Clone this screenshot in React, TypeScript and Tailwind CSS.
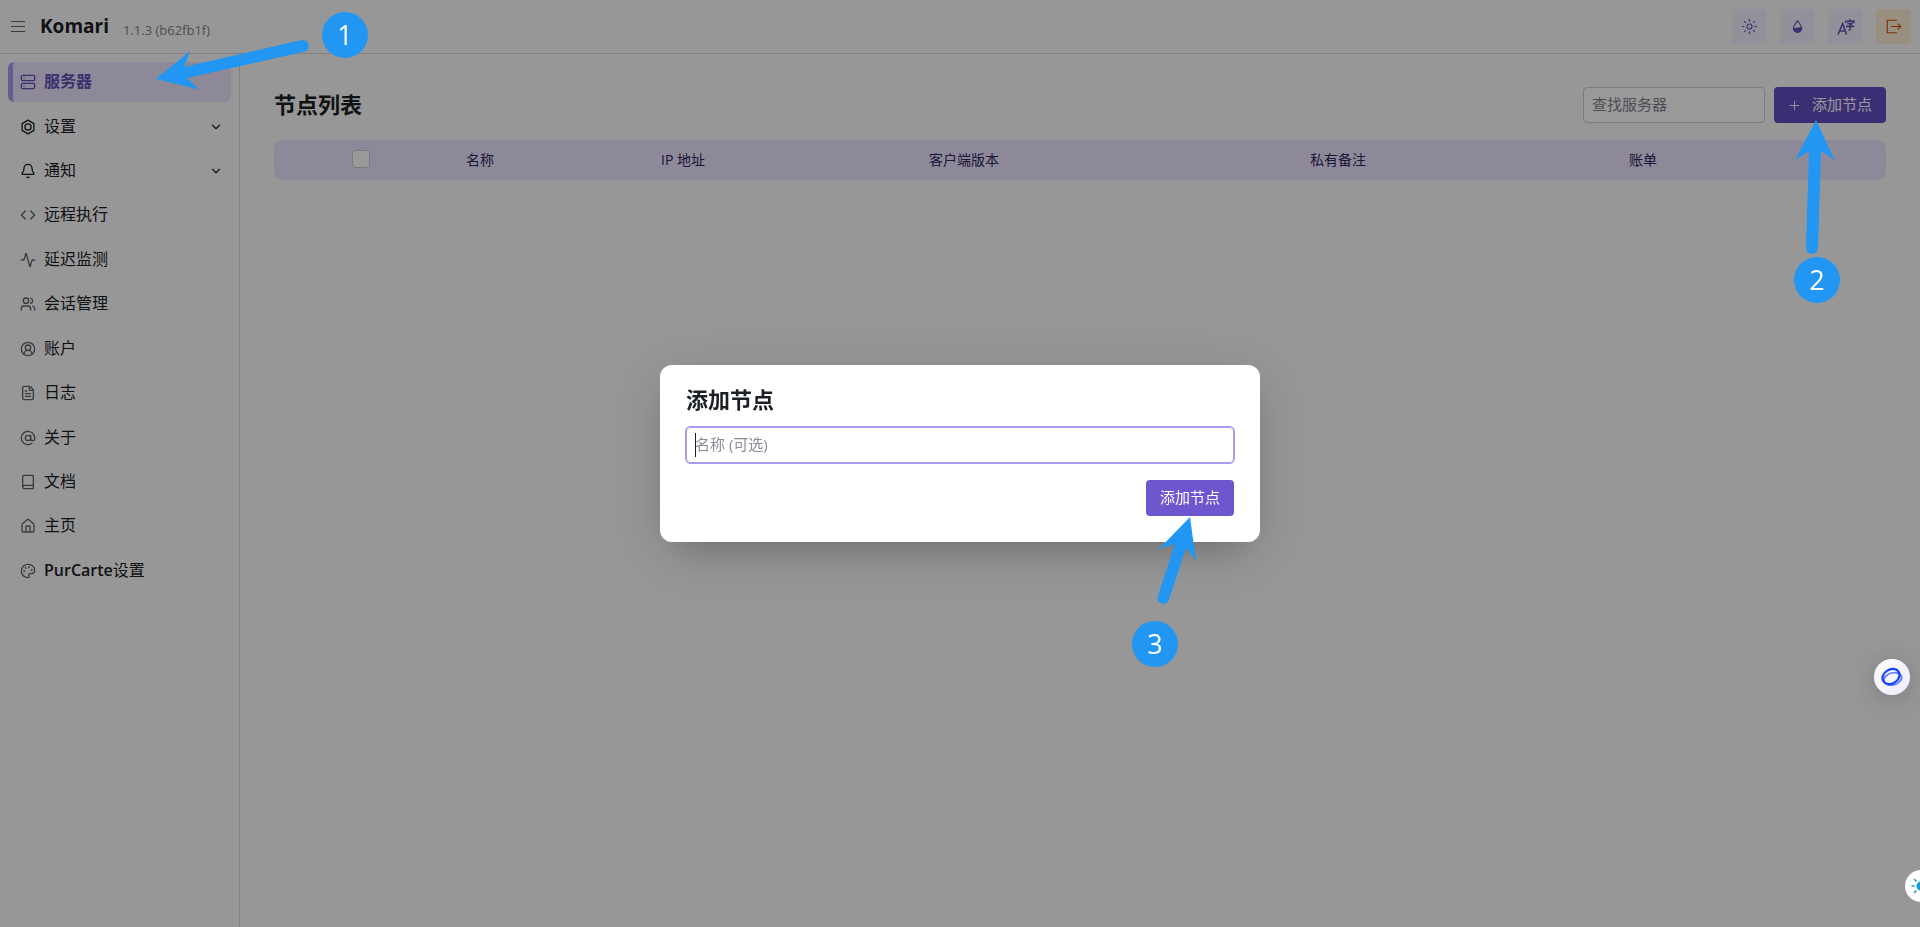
import React, { useState } from 'react';
import {
  Activity,
  AtSign,
  Bell,
  Book,
  ChevronDown,
  CircleUserRound,
  Code,
  FileText,
  House,
  Palette,
  Plus,
  Server,
  Users,
} from 'lucide-react';

interface NavItem {
  label: React.ReactNode;
  icon: React.ReactNode;
  active?: boolean;
  expandable?: boolean;
}

// Hexagon with a ring inside, used for the settings entry
const SettingsIcon = () => (
  <svg width="16" height="16" viewBox="0 0 24 24" fill="none" stroke="currentColor" strokeWidth="2" strokeLinejoin="round">
    <path d="M12 1.8 20.8 6.9V17.1L12 22.2 3.2 17.1V6.9Z" />
    <circle cx="12" cy="12" r="4.6" />
  </svg>
);

const SunIcon = () => (
  <svg width="15" height="15" viewBox="0 0 15 15" fill="none" stroke="currentColor" strokeWidth="1.2">
    <circle cx="7.5" cy="7.5" r="2.5" />
    <path d="M7.5 0v2.4M7.5 12.6V15M0 7.5h2.4M12.6 7.5H15M2.2 2.2l1.6 1.6M11.2 11.2l1.6 1.6M2.2 12.8l1.6-1.6M11.2 3.8l1.6-1.6" />
  </svg>
);

const DropIcon = () => (
  <svg width="15" height="15" viewBox="0 0 15 15" fill="none" stroke="currentColor" strokeWidth="1.1">
    <path d="M7.5 1.8C6.6 3.4 3.4 6.2 3.4 9.2a4.1 4.1 0 0 0 8.2 0C11.6 6.2 8.4 3.4 7.5 1.8Z" />
    <path d="M3.4 9.6c2.6-.4 4.800.2 8.200-1.600a4.100 4.100 0 0 1-8.200 1.600Z" fill="currentColor" />
  </svg>
);

const LanguageIcon = () => (
  <svg width="18" height="18" viewBox="0 0 18 18" fill="none" stroke="currentColor" strokeWidth="1.6">
    <path d="M1 16.5 5.7 5.8 9.4 16.5M2.8 13h5.5" />
    <path d="M8.9 5V3.2H17V5M12.8 1.3v1.9M10.3 5.6h4.7L13.2 7.5v3.8q0 1-1.8 1M8.9 8.4h8.3" />
  </svg>
);

const ExitIcon = () => (
  <svg width="17" height="17" viewBox="0 0 15 15" fill="none" stroke="currentColor">
    <path d="M10.5 2h-8.5v11h8.5M5.5 7.5h8M11.3 5l2.5 2.5-2.5 2.5" />
  </svg>
);

const navItems: NavItem[] = [
  { label: '服务器', icon: <Server size={16} />, active: true },
  { label: '设置', icon: <SettingsIcon />, expandable: true },
  { label: '通知', icon: <Bell size={16} />, expandable: true },
  { label: '远程执行', icon: <Code size={16} /> },
  { label: '延迟监测', icon: <Activity size={16} /> },
  { label: '会话管理', icon: <Users size={16} /> },
  { label: '账户', icon: <CircleUserRound size={16} /> },
  { label: '日志', icon: <FileText size={16} /> },
  { label: '关于', icon: <AtSign size={16} /> },
  { label: '文档', icon: <Book size={16} /> },
  { label: '主页', icon: <House size={16} /> },
  { label: <><span className="font-semibold">PurCarte</span>设置</>, icon: <Palette size={16} /> },
];

const columns = [
  { title: '名称', width: 'w-[195px]' },
  { title: 'IP 地址', width: 'w-[268px]' },
  { title: '客户端版本', width: 'w-[381px]' },
  { title: '私有备注', width: 'w-[319px]' },
  { title: '账单', width: 'w-[269px]' },
];

const Header = () => (
  <header className="flex h-[54px] shrink-0 items-center justify-between border-b border-[#d9d9e0] pr-[9px] pl-2">
    <div className="flex items-center">
      <button type="button" aria-label="菜单" className="flex size-5 items-center justify-center text-[#60646c]">
        <svg width="14" height="14" viewBox="0 0 14 14" stroke="currentColor" strokeWidth="1.2">
          <path d="M0 1.5h14M0 6.5h14M0 11.5h14" />
        </svg>
      </button>
      <div className="ml-3 flex items-end gap-[14px] pb-0.5">
        <span className="text-[19px] leading-7 font-bold">Komari</span>
        <span className="text-[13px] leading-5 text-[#80838d]">1.1.3 (b62fb1f)</span>
      </div>
    </div>
    <div className="flex gap-[13px]">
      <button type="button" aria-label="主题" className="flex size-[35px] items-center justify-center rounded bg-[#f4f0fe] text-[#6550b9]">
        <SunIcon />
      </button>
      <button type="button" aria-label="颜色" className="flex size-[35px] items-center justify-center rounded bg-[#f4f0fe] text-[#6550b9]">
        <DropIcon />
      </button>
      <button type="button" aria-label="语言" className="flex size-[35px] items-center justify-center rounded bg-[#f4f0fe] text-[#6550b9]">
        <LanguageIcon />
      </button>
      <button type="button" aria-label="退出" className="flex size-[35px] items-center justify-center rounded bg-[#ffefd6] text-[#cc4e00]">
        <ExitIcon />
      </button>
    </div>
  </header>
);

const Sidebar = () => (
  <aside className="w-60 shrink-0 border-r border-[#d9d9e0] p-2">
    <nav className="grid h-[529px] auto-rows-fr gap-1">
      {navItems.map((item, index) => (
        <a
          key={index}
          href="#"
          className={
            item.active
              ? 'flex items-center rounded-md border-l-[5px] border-[#aa99ec] bg-[#ebe4ff] pr-2 pl-[7px] font-semibold text-[#6550b9]'
              : 'flex items-center rounded-md pr-2 pl-3'
          }
        >
          <span className={item.active || item.expandable ? '' : 'text-[#60646c]'}>{item.icon}</span>
          <span className="ml-2 flex-1 pb-0.5 text-base">{item.label}</span>
          {item.expandable && <ChevronDown size={14} />}
        </a>
      ))}
    </nav>
  </aside>
);

const NodeList = () => (
  <main className="min-w-0 flex-1 px-[34px] pt-[33px]">
    <div className="flex items-center justify-between">
      <h1 className="pb-0.5 text-[22px] leading-8 font-bold">节点列表</h1>
      <div className="flex gap-[9px]">
        <input
          type="text"
          aria-label="查找服务器"
          placeholder="查找服务器"
          className="h-9 w-[182px] rounded border border-[#cdced6] bg-white px-2 pb-0.5 text-[15px] placeholder:text-[#80838d]"
        />
        <button type="button" className="flex h-9 items-center gap-[10px] rounded bg-[#654dc4] pr-[14px] pl-[13px] text-[15px] text-white">
          <Plus size={15} strokeWidth={1.5} />
          <span className="pb-0.5">添加节点</span>
        </button>
      </div>
    </div>
    <div className="mt-[17px] overflow-x-auto rounded-lg">
      <table className="w-full table-fixed bg-[#ebe4ff] text-sm text-[#2f265f]">
        <thead>
          <tr className="h-10">
            <th className="w-[180px] pr-1.5 pb-0.5">
              <input
                type="checkbox"
                aria-label="全选"
                className="mx-auto block size-[18px] appearance-none rounded-[3px] border border-[#cdced6] bg-white"
              />
            </th>
            {columns.map((column) => (
              <th key={column.title} className={`${column.width} px-3 text-left font-normal`}>
                {column.title}
              </th>
            ))}
          </tr>
        </thead>
      </table>
    </div>
  </main>
);

const AddNodeDialog = () => {
  const [name, setName] = useState('');

  return (
    <div className="fixed inset-0 flex items-center justify-center bg-black/40 pb-5">
      <div
        role="dialog"
        aria-labelledby="dialog-title"
        className="w-[600px] rounded-xl bg-white p-[26px] shadow-[0_12px_60px_rgba(0,0,0,0.15),0_16px_36px_-20px_rgba(30,0,40,0.3)]"
      >
        <h2 id="dialog-title" className="-mt-1.5 text-[22px] leading-7 font-bold">
          添加节点
        </h2>
        <div className="relative mt-3.5">
          <input
            type="text"
            aria-label="名称"
            placeholder="名称 (可选)"
            value={name}
            autoFocus
            onChange={(e) => setName(e.target.value)}
            className="block h-9 w-full rounded border border-[#aa99ec] px-2 pb-0.5 text-[15px] caret-transparent outline-1 outline-[#aa99ec] placeholder:text-[#8b8d98]"
          />
          {name === '' && <span className="pointer-events-none absolute top-1.5 left-[9px] h-6 w-px bg-[#1c2024]" />}
        </div>
        <div className="mt-[17px] flex justify-end">
          <button type="button" className="h-9 rounded bg-[#6e56cf] px-[14px] pb-0.5 text-[15px] text-white">
            添加节点
          </button>
        </div>
      </div>
    </div>
  );
};

// Numbered marker of the walkthrough
const StepBadge = ({ step, className }: { step: number; className: string }) => (
  <span className={`absolute flex size-[46px] items-center justify-center rounded-full bg-[#2196f3] text-[27px] text-white ${className}`}>
    {step}
  </span>
);

const Walkthrough = () => (
  <div className="pointer-events-none fixed inset-0">
    <svg className="absolute top-0 left-0 size-full" fill="#2196f3">
      <path d="M156 79 190 51 184 67 302 40A6 6 0 0 1 305 51.5L187 78 199 89.5Z" />
      <path d="M1816 120 1834.5 160 1821 151 1818 248A6 6 0 0 1 1806 248L1809 151 1795.5 159.5Z" />
      <path d="M1190 517 1196 561 1186 548 1168.5 601A6 6 0 0 1 1157.5 597L1175 544 1159 549Z" />
    </svg>
    <StepBadge step={1} className="top-3 left-[322px]" />
    <StepBadge step={2} className="top-[257px] left-[1794px]" />
    <StepBadge step={3} className="top-[621px] left-[1132px]" />
  </div>
);

const FloatingButtons = () => (
  <>
    <button
      type="button"
      aria-label="助手"
      className="fixed top-[659px] right-[10px] flex size-9 items-center justify-center rounded-full bg-linear-to-br from-white to-[#eeeaff] shadow-[0_4px_30px_rgba(0,0,0,0.2)]"
    >
      <svg width="22" height="20" viewBox="0 0 22 20" fill="none">
        <ellipse cx="11.8" cy="11.8" rx="9" ry="6" transform="rotate(-15 11.8 11.8)" stroke="#5f7bff" strokeWidth="1.8" />
        <ellipse cx="10" cy="9.5" rx="9" ry="7" transform="rotate(-32 10 9.5)" stroke="#1540f5" strokeWidth="2.2" />
      </svg>
    </button>
    <div className="fixed top-[870px] right-0 h-8 w-[15px] overflow-hidden">
      <button type="button" aria-label="亮度" className="flex size-8 items-center justify-center rounded-full bg-white">
        <svg width="20" height="20" viewBox="0 0 20 20" stroke="#149bdf" strokeWidth="1.5" strokeLinecap="round">
          <circle cx="10" cy="10" r="4.5" fill="#149bdf" stroke="none" />
          <path d="M1 10h2M3.5 3.5l1.4 1.4M3.5 16.5l1.4-1.4M10 1v2M10 17v2" />
        </svg>
      </button>
    </div>
  </>
);

const App: React.FC = () => {
  return (
    <div className="flex min-h-screen flex-col bg-[#fcfcfd] font-['Open_Sans','Noto_Sans_CJK_SC',sans-serif] text-[#1c2024]">
      <Header />
      <div className="flex flex-1">
        <Sidebar />
        <NodeList />
      </div>
      <AddNodeDialog />
      <FloatingButtons />
      <Walkthrough />
    </div>
  );
};

export default App;
